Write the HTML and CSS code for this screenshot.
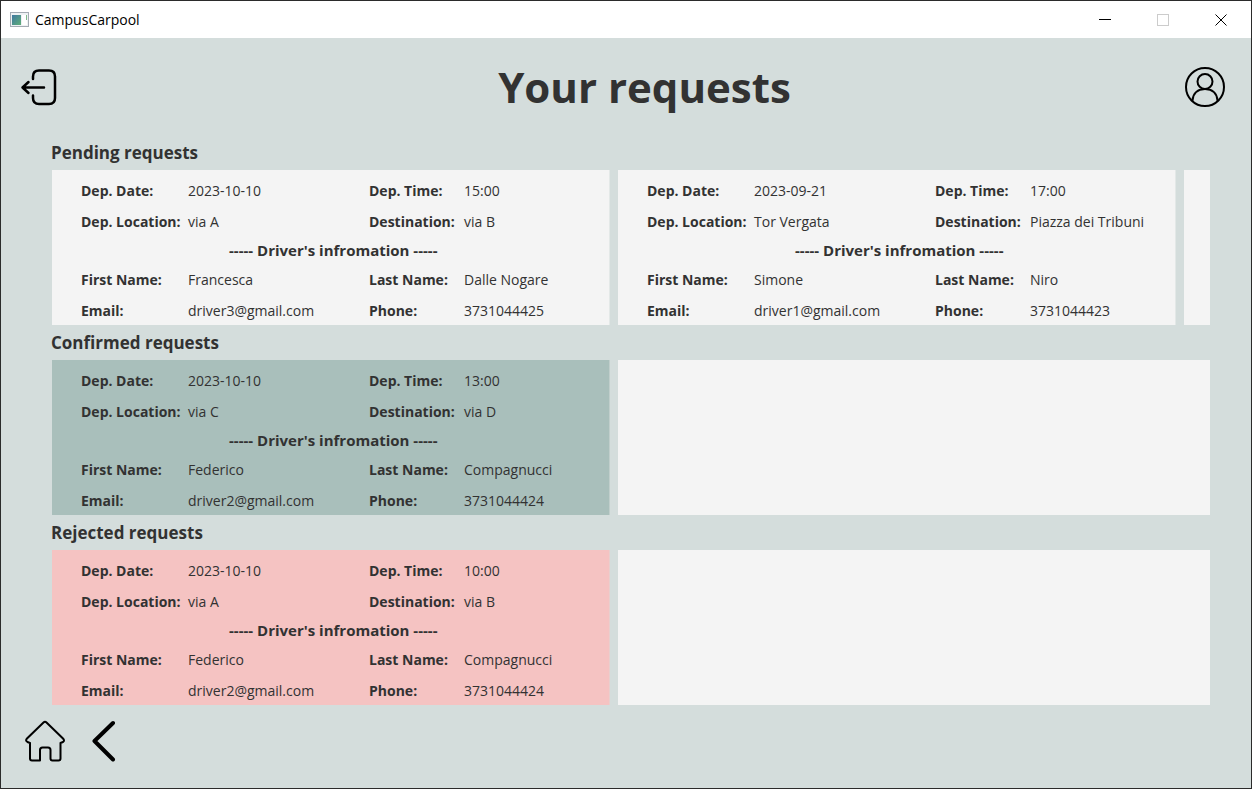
FILE: index.html
```html
<!DOCTYPE html>
<html lang="en">
<head>
<meta charset="utf-8">
<title>CampusCarpool</title>
<link rel="stylesheet" href="styles.css">
</head>
<body>
<div class="window">
  <div class="titlebar">
    <svg class="app-icon" viewBox="0 0 19 16" aria-hidden="true">
      <defs><linearGradient id="g" x1="0" y1="0" x2="1" y2="1"><stop offset="0" stop-color="#3f78a0"/><stop offset="1" stop-color="#5fae78"/></linearGradient></defs>
      <rect x=".5" y=".5" width="18" height="14" fill="#eef1f3" stroke="#a4abb3"/>
      <rect x="2" y="3" width="9" height="10" fill="url(#g)"/>
      <rect x="12" y="3" width="5" height="10" fill="#fff"/>
      <rect x="16" y="3" width="1" height="5" fill="#7fb98a"/>
    </svg>
    <span class="app-name">CampusCarpool</span>
    <button class="caption" aria-label="Minimize"><svg viewBox="0 0 12 12"><path d="M0 5.5H12" stroke="#000"/></svg></button>
    <button class="caption" aria-label="Maximize" disabled><svg viewBox="0 0 12 12"><rect x=".5" y=".5" width="11" height="11" fill="none" stroke="#ccc"/></svg></button>
    <button class="caption" aria-label="Close"><svg viewBox="0 0 12 12"><path d="M.5.5l11 11M11.5.5l-11 11" stroke="#000"/></svg></button>
  </div>

  <header class="header">
    <button class="icon-button logout" aria-label="Log out">
      <svg width="38" height="38" viewBox="0 0 38 38"><path d="M13 11V8.500q0-6 6-6h10q6 0 6 6v21.500q0 6-6 6H19q-6 0-6-6v-2.500M24 19.500H2.500M8.500 14L2.500 19.500L8.500 25" /></svg>
    </button>
    <h1 class="title">Your requests</h1>
    <button class="icon-button" aria-label="Profile">
      <svg width="40" height="40" viewBox="0 0 40 40"><circle cx="20" cy="20" r="19"/><circle cx="20" cy="14.500" r="7.500"/><path d="M7.500 33.500C8 26 13 22 20 22s12 4 12.500 11.500"/></svg>
    </button>
  </header>

  <main class="content">
    <h2 class="section-title">Pending requests</h2>
    <ul class="requests">
      <li class="card">
        <dl class="details">
          <dt>Dep. Date:</dt><dd>2023-10-10</dd><dt>Dep. Time:</dt><dd>15:00</dd>
          <dt>Dep. Location:</dt><dd>via A</dd><dt>Destination:</dt><dd>via B</dd>
          <dt class="divider">----- Driver's infromation -----</dt>
          <dt>First Name:</dt><dd>Francesca</dd><dt>Last Name:</dt><dd>Dalle Nogare</dd>
          <dt>Email:</dt><dd>driver3@gmail.com</dd><dt>Phone:</dt><dd>3731044425</dd>
        </dl>
      </li>
      <li class="card">
        <dl class="details">
          <dt>Dep. Date:</dt><dd>2023-09-21</dd><dt>Dep. Time:</dt><dd>17:00</dd>
          <dt>Dep. Location:</dt><dd>Tor Vergata</dd><dt>Destination:</dt><dd>Piazza dei Tribuni</dd>
          <dt class="divider">----- Driver's infromation -----</dt>
          <dt>First Name:</dt><dd>Simone</dd><dt>Last Name:</dt><dd>Niro</dd>
          <dt>Email:</dt><dd>driver1@gmail.com</dd><dt>Phone:</dt><dd>3731044423</dd>
        </dl>
      </li>
      <li class="card empty"></li>
    </ul>

    <h2 class="section-title">Confirmed requests</h2>
    <ul class="requests">
      <li class="card confirmed">
        <dl class="details">
          <dt>Dep. Date:</dt><dd>2023-10-10</dd><dt>Dep. Time:</dt><dd>13:00</dd>
          <dt>Dep. Location:</dt><dd>via C</dd><dt>Destination:</dt><dd>via D</dd>
          <dt class="divider">----- Driver's infromation -----</dt>
          <dt>First Name:</dt><dd>Federico</dd><dt>Last Name:</dt><dd>Compagnucci</dd>
          <dt>Email:</dt><dd>driver2@gmail.com</dd><dt>Phone:</dt><dd>3731044424</dd>
        </dl>
      </li>
      <li class="card empty"></li>
    </ul>

    <h2 class="section-title">Rejected requests</h2>
    <ul class="requests">
      <li class="card rejected">
        <dl class="details">
          <dt>Dep. Date:</dt><dd>2023-10-10</dd><dt>Dep. Time:</dt><dd>10:00</dd>
          <dt>Dep. Location:</dt><dd>via A</dd><dt>Destination:</dt><dd>via B</dd>
          <dt class="divider">----- Driver's infromation -----</dt>
          <dt>First Name:</dt><dd>Federico</dd><dt>Last Name:</dt><dd>Compagnucci</dd>
          <dt>Email:</dt><dd>driver2@gmail.com</dd><dt>Phone:</dt><dd>3731044424</dd>
        </dl>
      </li>
      <li class="card empty"></li>
    </ul>
  </main>

  <nav class="footer">
    <button class="icon-button" aria-label="Home">
      <svg width="40" height="42" viewBox="0 0 40 42"><path d="M18.500 2.500q1.500-1.500 3 0L38 18.500q2 2 0 3.500l-2.500 1v15.500q0 2-2 2h-6q-2 0-2-2V30q0-2.500-2.500-2.500h-5.500Q15 27.500 15 30v10.500H7q-2 0-2-2V23l-2.500-1q-2.500-1.500-.5-3.500z"/></svg>
    </button>
    <button class="icon-button back" aria-label="Back">
      <svg width="24" height="42" viewBox="0 0 24 42"><path d="M21 3L2.500 21L21 39.500"/></svg>
    </button>
  </nav>
</div>
</body>
</html>
```
FILE: styles.css
```css
* {
  box-sizing: border-box;
}

body {
  margin: 0;
  font-family: "Open Sans", "Noto Sans", sans-serif;
  color: #323232;
}

.window {
  display: flex;
  flex-direction: column;
  min-height: 100vh;
  border: 1px solid #2b2b2b;
  background: #d4dddc;
}

button {
  padding: 0;
  border: 0;
  background: none;
}

.titlebar {
  display: flex;
  align-items: center;
  height: 37px;
  padding: 0 1px 0 9px;
  background: #fff;
}

.app-icon {
  width: 19px;
  height: 16px;
}

.app-name {
  flex: 1;
  padding-left: 6px;
  color: #000;
  font-size: 14px;
}

.caption {
  display: flex;
  align-items: center;
  justify-content: center;
  width: 58px;
  height: 36px;
}

.caption svg {
  width: 12px;
  height: 12px;
}

.header {
  display: flex;
  align-items: center;
  height: 97px;
  padding: 0 26px 0 19px;
}

.title {
  flex: 1;
  margin: 0;
  padding-left: 46px;
  font-size: 42px;
  line-height: 60px;
  text-align: center;
}

.icon-button {
  display: flex;
}

.icon-button svg {
  fill: none;
  stroke: #000;
  stroke-width: 2;
  stroke-linecap: round;
  stroke-linejoin: round;
}

.logout path {
  stroke-width: 2.5;
}

.back path {
  stroke-width: 4;
}

.content {
  padding: 0 41px 0 51px;
}

.section-title {
  margin: 0 0 0 -1px;
  font-size: 17px;
  line-height: 35px;
}

.requests {
  display: flex;
  gap: 8px;
  min-height: 155px;
  margin: 0;
  padding: 0;
  overflow: hidden;
  list-style: none;
}

.card {
  flex: none;
  width: 558px;
  padding: 5px 0 0 29px;
  border-right: 1px solid #e3e8e7;
  background: #f4f4f4;
}

.confirmed {
  border-right-color: #c1cfcc;
  background: #a9bfbb;
}

.rejected {
  border-right-color: #e8cfce;
  background: #f5c3c2;
}

.empty {
  flex: 1;
  width: auto;
  padding: 0;
  border-right: 0;
}

.details {
  display: grid;
  grid-template-columns: 107px 181px 95px 1fr;
  grid-template-rows: 31px 31px 26px 33px 29px;
  align-items: center;
  margin: 0;
  font-size: 14px;
  line-height: 19px;
  white-space: nowrap;
}

.details dt {
  font-weight: 700;
}

.details dd {
  margin: 0;
}

.details .divider {
  grid-column: 1 / -1;
  padding-left: 148px;
  font-size: 15px;
}

.footer {
  display: flex;
  align-items: center;
  gap: 27px;
  padding: 15px 24px;
}
```
